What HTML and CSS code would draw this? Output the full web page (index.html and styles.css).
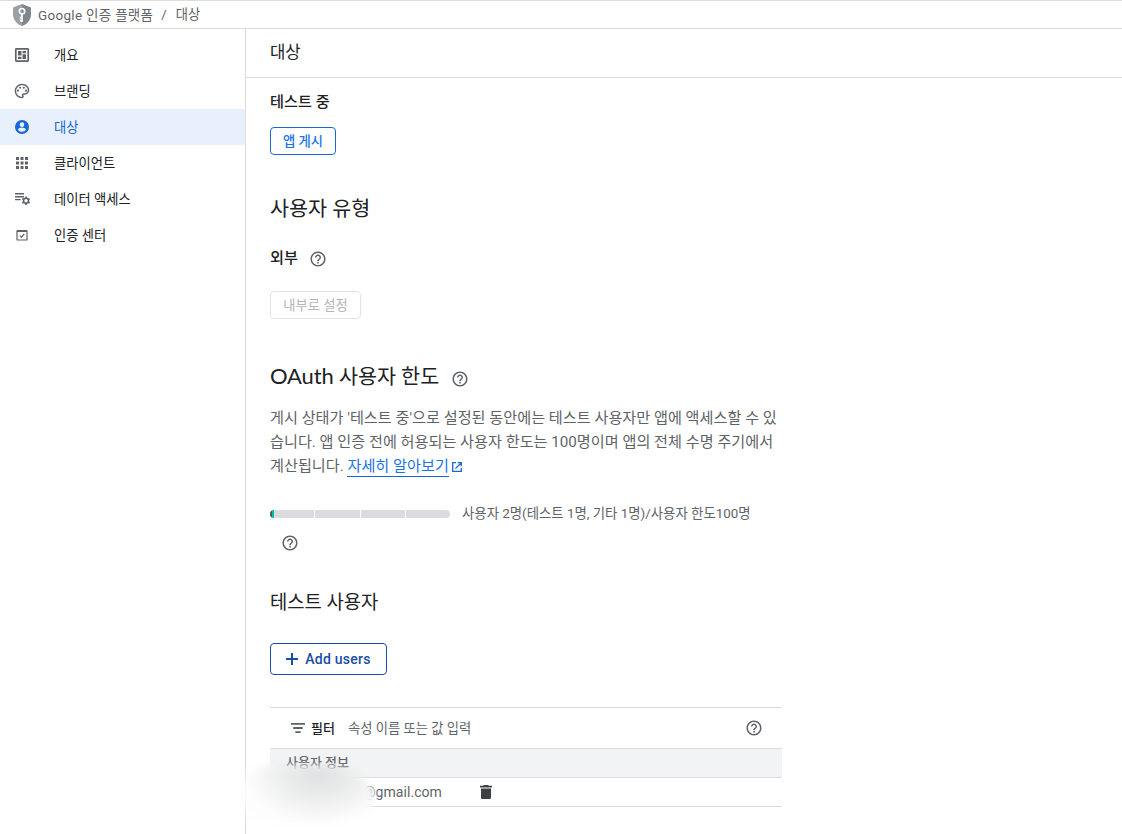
FILE: index.html
```html
<!DOCTYPE html>
<html lang="ko">
<head>
<meta charset="utf-8">
<title>대상 - Google 인증 플랫폼</title>
<link rel="stylesheet" href="styles.css">
</head>
<body>
<svg class="sprite" width="0" height="0">
  <symbol id="help" viewBox="0 0 24 24"><path d="M11 18h2v-2h-2v2zm1-16C6.48 2 2 6.48 2 12s4.48 10 10 10 10-4.48 10-10S17.52 2 12 2zm0 18c-4.41 0-8-3.59-8-8s3.59-8 8-8 8 3.59 8 8-3.59 8-8 8zm0-14c-2.21 0-4 1.79-4 4h2c0-1.1.9-2 2-2s2 .9 2 2c0 2-3 1.75-3 5h2c0-2.25 3-2.5 3-5 0-2.21-1.79-4-4-4z"/></symbol>
</svg>
<header class="topbar">
  <svg class="shield" viewBox="0 0 18 22"><path fill="#9aa0a6" d="M9 0 0 3.4v7.2C0 15.800 3.800 20.400 9 22z"/><path fill="#80868b" d="m9 0 9 3.400v7.200c0 5.200-3.800 9.800-9 11.400z"/><circle cx="9" cy="7.200" r="2.700" fill="none" stroke="#fff" stroke-width="1.700"/><path d="M9 10v8M9 13.700H6.800M9 16.700H6.800" fill="none" stroke="#fff" stroke-width="1.700"/></svg>
  <span class="product">Google 인증 플랫폼</span><span class="slash">/</span><span class="crumb">대상</span>
</header>
<div class="shell">
  <nav class="sidebar">
    <a class="item"><svg viewBox="0 0 16 16"><rect x="1.800" y="1.800" width="12.400" height="12.400" rx=".6" fill="none" stroke="currentColor" stroke-width="1.700"/><path d="M4 4h3.500v4.500H4zM8.500 4H12v2.200H8.500zM8.500 7.300H12V12H8.500zM4 9.700h3.500V12H4z"/></svg><span>개요</span></a>
    <a class="item"><svg viewBox="1 1 22 22"><path d="M12 22C6.490 22 2 17.510 2 12S6.490 2 12 2s10 4.040 10 9c0 3.310-2.690 6-6 6h-1.770c-.28 0-.5.220-.5.500 0 .120.050.230.130.330.410.470.640 1.060.640 1.670A2.500 2.500 0 0 1 12 22zm0-18c-4.410 0-8 3.590-8 8s3.590 8 8 8c.280 0 .5-.220.500-.500a.54.54 0 0 0-.140-.350c-.410-.460-.630-1.050-.630-1.650a2.500 2.500 0 0 1 2.500-2.500H16c2.210 0 4-1.790 4-4 0-3.860-3.590-7-8-7z"/><circle cx="6.500" cy="11.500" r="1.500"/><circle cx="9.500" cy="7.500" r="1.500"/><circle cx="14.500" cy="7.500" r="1.500"/><circle cx="17.500" cy="11.500" r="1.500"/></svg><span>브랜딩</span></a>
    <a class="item active"><svg viewBox="0 0 24 24"><path d="M12 1.500a10.500 10.500 0 1 0 0 21 10.500 10.500 0 0 0 0-21zM12 5a3.500 3.500 0 1 1 0 7 3.500 3.500 0 0 1 0-7zm0 14.200c-2.500 0-4.710-1.280-6-3.220.030-1.990 4-3.080 6-3.080s5.970 1.090 6 3.080a7.200 7.200 0 0 1-6 3.220z"/></svg><span>대상</span></a>
    <a class="item"><svg viewBox="0 0 16 16"><path d="M2 2h3v3H2zm4.500 0h3v3h-3zM11 2h3v3h-3zM2 6.500h3v3H2zm4.500 0h3v3h-3zm4.500 0h3v3h-3zM2 11h3v3H2zm4.500 0h3v3h-3zm4.500 0h3v3h-3z"/></svg><span>클라이언트</span></a>
    <a class="item"><svg viewBox="0 0 16 16"><path d="M1 2.100h9v1.400H1zm0 2.900h9v1.400H1zm0 2.900h5.500v1.400H1z"/><circle cx="12" cy="9.800" r="2.500" fill="none" stroke="currentColor" stroke-width="1.600"/><path d="M12 5.600v1.900m0 4.600v1.900M8.400 7.700l1.600.9m4 2.400 1.600.9m-7.200 0 1.600-.9m4-2.400 1.600-.9" fill="none" stroke="currentColor" stroke-width="1.700"/></svg><span>데이터 액세스</span></a>
    <a class="item"><svg viewBox="0 0 16 16"><path d="M3.600 3.500h8.800q.6 0 .6.600v8.300q0 .6-.6.600H3.600q-.6 0-.6-.6V4.100q0-.6.600-.6zM3 4.300h10" fill="none" stroke="currentColor" stroke-width="1.200"/><path d="m5.800 8.600 1.500 1.500 3-3.100" fill="none" stroke="currentColor" stroke-width="1.200"/></svg><span>인증 센터</span></a>
  </nav>
  <main class="main">
    <div class="page-head"><h1>대상</h1></div>
    <div class="content">
      <div class="status">테스트 중</div>
      <button class="btn publish"><span>앱 게시</span></button>

      <h2 class="type-title">사용자 유형</h2>
      <div class="type-row"><span>외부</span><svg class="help"><use href="#help"/></svg></div>
      <button class="btn internal" disabled><span>내부로 설정</span></button>

      <h2 class="cap-title"><span><span class="latin">OAuth</span> 사용자 한도</span><svg class="help"><use href="#help"/></svg></h2>
      <p class="desc"><span>게시 상태가 '테스트 중'으로 설정된 동안에는 테스트 사용자만 앱에 액세스할 수 있</span><br><span>습니다. 앱 인증 전에 허용되는 사용자 한도는 100명이며 앱의 전체 수명 주기에서</span><br><span>계산됩니다. <a class="link">자세히 알아보기</a></span><svg class="ext" viewBox="0 0 12 12"><path d="M5 1.700H1.700v8.600h8.600V7M6.700 1.700h3.600v3.600M10.300 1.700 4.400 7.600" fill="none" stroke="currentColor" stroke-width="1.300"/></svg></p>

      <div class="quota">
        <div class="meter"><i class="seg first"></i><i class="seg"></i><i class="seg"></i><i class="seg"></i></div>
        <span class="quota-text">사용자 2명(테스트 1명, 기타 1명)/사용자 한도100명</span>
      </div>
      <svg class="help quota-help"><use href="#help"/></svg>

      <h2 class="test-title">테스트 사용자</h2>
      <button class="btn add"><svg viewBox="0 0 14 14"><path d="M7 1v12M1 7h12" stroke="currentColor" stroke-width="2"/></svg><span class="add-label">Add users</span></button>

      <div class="table">
        <div class="filter">
          <svg class="filter-icon" viewBox="0 0 14 10"><path d="M0 0h14v1.800H0zM2.300 4.100h9.400v1.800H2.300zM4.300 8.200h5.400V10H4.300z"/></svg>
          <b>필터</b><span class="placeholder">속성 이름 또는 값 입력</span>
          <svg class="help"><use href="#help"/></svg>
        </div>
        <div class="thead"><span>사용자 정보</span></div>
        <div class="trow"><span class="mail">@gmail.com</span><svg class="trash" viewBox="0 0 12 14"><path d="M3.800 0h4.400l.7.800H12v1.700H0V.8h3.100zM1 3.500h10v9q0 1.500-1.500 1.500h-7Q1 14 1 12.500z"/></svg></div>
        <div class="smudge"></div>
      </div>
    </div>
  </main>
</div>
</body>
</html>
```

FILE: styles.css
```css
* { box-sizing: border-box; }
body {
  margin: 0;
  height: 834px;
  overflow: hidden;
  background: #fff;
  color: #202124;
  font: 13px/20px Roboto, "Noto Sans CJK KR", sans-serif;
  display: flex;
  flex-direction: column;
}
.sprite { position: absolute; }
svg { fill: currentColor; flex: none; }
h1, h2, p { margin: 0; font-weight: 400; }

.topbar {
  height: 29px;
  flex: none;
  border-top: 1px solid #dadce0;
  border-bottom: 1px solid #dadce0;
  display: flex;
  align-items: center;
  padding-left: 13px;
  color: #5f6368;
}
.shield { width: 18px; height: 22px; margin-right: 7px; }
.product { font-size: 13.5px; letter-spacing: .3px; }
.slash { margin: 0 9px 0 8px; }
.crumb { font-size: 13.3px; padding-top: 1px; }

.shell { flex: 1; display: flex; min-height: 0; }
.sidebar {
  width: 246px;
  flex: none;
  border-right: 1px solid #dadce0;
  padding-top: 8px;
}
.item {
  height: 36px;
  display: flex;
  align-items: center;
  gap: 24px;
  padding-left: 14px;
  font-size: 13.3px;
}
.item span { padding-top: 2px; }
.item svg { width: 16px; height: 16px; color: #5f6368; }
.active { background: #e8f0fe; color: #1967d2; }
.active svg { color: #1967d2; }

.main { flex: 1; min-width: 0; }
.page-head {
  height: 49px;
  border-bottom: 1px solid #dadce0;
  padding: 12px 24px 0;
}
h1 { font-size: 16.7px; line-height: 24px; }
.content {
  padding: 12px 0 0 24px;
  width: 536px;
  display: flex;
  flex-direction: column;
  align-items: flex-start;
}
.help { width: 18px; height: 18px; color: #5f6368; }
.status, .type-row { font-size: 15.2px; line-height: 24px; font-weight: 500; }
.btn {
  display: flex;
  align-items: center;
  justify-content: center;
  padding: 0;
  height: 28px;
  border: 1px solid #1967d2;
  border-radius: 4px;
  background: #fff;
  color: #1a73e8;
  font: 500 13.3px/20px Roboto, "Noto Sans CJK KR", sans-serif;
}
.publish { width: 66px; margin-top: 13px; }
.publish span, .internal span { padding-top: 1px; }
.internal { width: 91px; margin-top: 21px; border-color: #e3e4e6; color: #b4b6b9; font-weight: 400; }
h2 { font-size: 20.7px; line-height: 28px; height: 28px; }
.type-title { margin-top: 40px; }
.type-row { display: flex; align-items: center; gap: 11px; margin-top: 23px; height: 24px; }
.type-row .help { margin-top: 2px; }
.cap-title { display: flex; align-items: center; gap: 12px; margin-top: 43px; white-space: nowrap; }
.cap-title .help { margin-top: 6px; }
.latin { font-family: Lato, sans-serif; font-size: 22px; letter-spacing: -.1px; }
.desc {
  margin-top: 16px;
  width: 520px;
  height: 72px;
  font-size: 15.170px;
  line-height: 24px;
  color: #5f6368;
  white-space: nowrap;
}
.link { color: #1a73e8; border-bottom: 1px solid #1967d2; padding-bottom: 1px; }
.ext { width: 12px; height: 12px; color: #1967d2; margin-left: 2px; vertical-align: -2px; }
.quota { display: flex; align-items: center; gap: 12px; margin-top: 23px; height: 24px; }
.meter {
  width: 180px;
  height: 8px;
  margin-top: 2px;
  display: flex;
  gap: 1px;
  border-radius: 4px;
  overflow: hidden;
}
.seg { flex: 1; background: #dadce0; }
.first { background: linear-gradient(90deg, #3c5a64 2px, #00bfa5 2px 4px, #dadce0 4px); }
.quota-text { color: #5f6368; font-size: 13.4px; white-space: nowrap; padding-top: 1px; }
.quota-help { margin: 9px 0 0 11px; }
.test-title { margin-top: 37px; font-size: 18.8px; }
.add {
  width: 117px;
  height: 32px;
  margin-top: 26px;
  gap: 6px;
  border-color: #174ea6;
  color: #174ea6;
  font-size: 14px;
  letter-spacing: .25px;
}
.add svg { width: 14px; height: 14px; }
.add-label { margin-right: 1px; }

.table { position: relative; width: 512px; margin-top: 32px; border-top: 1px solid #dadce0; }
.filter { height: 41px; display: flex; align-items: center; padding: 0 19px 0 21px; border-bottom: 1px solid #dadce0; }
.filter-icon { width: 14px; height: 10px; margin-right: 6px; color: #5f6368; }
.filter b { font-weight: 500; padding-top: 1px; }
.placeholder { margin-left: 13px; padding-top: 1px; flex: 1; color: #5f6368; font-size: 13.3px; }
.thead { height: 29px; padding: 4px 16px; background: #f1f3f4; border-bottom: 1px solid #dadce0; color: #5f6368; font-weight: 500; }
.trow { height: 29px; display: flex; align-items: center; padding-left: 93px; border-bottom: 1px solid #dadce0; color: #5f6368; }
.mail { font-size: 14px; width: 117px; letter-spacing: .05px; }
.trash { width: 12px; height: 14px; color: #3c4043; }
.smudge {
  position: absolute;
  left: -29px;
  top: 57px;
  width: 134px;
  height: 58px;
  border-radius: 30px 56px 40px 30px / 30px 34px 26px 30px;
  background: radial-gradient(72px 48px at 78px 10px, #e0e1e2, #e9eaea 40%, #f8f8f8 85%, #fdfdfd);
  filter: blur(3.5px);
}
```
